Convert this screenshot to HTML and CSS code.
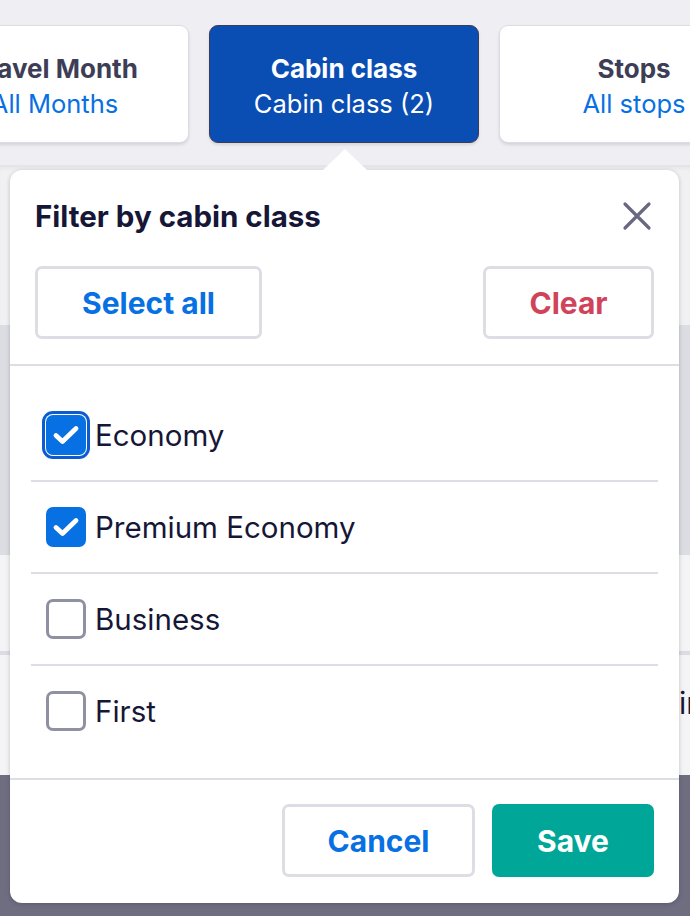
FILE: index.html
```html
<!DOCTYPE html>
<html lang="en">
<head>
    <meta charset="UTF-8">
    <meta name="viewport" content="width=device-width, initial-scale=1.0">
    <title>Cabin class filter</title>
    <link rel="stylesheet" href="styles.css">
</head>
<body>
    <div class="screen">
        <div class="tabs">
            <div class="tab tab-month">
                <span class="tab-title">Travel Month</span>
                <span class="tab-value">All Months</span>
            </div>
            <div class="tab tab-cabin active">
                <span class="tab-title">Cabin class</span>
                <span class="tab-value">Cabin class (2)</span>
            </div>
            <div class="tab tab-stops">
                <span class="tab-title">Stops</span>
                <span class="tab-value">All stops</span>
            </div>
        </div>

        <div class="page">
            <div class="band band-light"></div>
            <div class="band band-grey"></div>
            <div class="band band-rows">
                <div class="bg-row"></div>
                <div class="bg-row"><span class="bg-text">in</span></div>
            </div>
            <div class="band band-dark"></div>
        </div>

        <div class="popover">
            <div class="pop-header">
                <h2>Filter by cabin class</h2>
                <button class="close" aria-label="Close">
                    <svg width="30" height="30" viewBox="0 0 30 30">
                        <path d="M3 3 L27 27 M27 3 L3 27" stroke="#68697f" stroke-width="3.2" stroke-linecap="round" fill="none"/>
                    </svg>
                </button>
            </div>
            <div class="pop-actions">
                <button class="btn btn-outline btn-select">Select all</button>
                <button class="btn btn-outline btn-clear">Clear</button>
            </div>

            <ul class="options">
                <li class="option">
                    <span class="check checked focused">
                        <svg width="30" height="30" viewBox="0 0 30 30"><path d="M5 15.5 L11.5 21.5 L25 8.5" stroke="#fff" stroke-width="4.8" stroke-linecap="round" stroke-linejoin="round" fill="none"/></svg>
                    </span>
                    <span class="option-label">Economy</span>
                </li>
                <li class="option">
                    <span class="check checked">
                        <svg width="30" height="30" viewBox="0 0 30 30"><path d="M5 15.5 L11.5 21.5 L25 8.5" stroke="#fff" stroke-width="4.8" stroke-linecap="round" stroke-linejoin="round" fill="none"/></svg>
                    </span>
                    <span class="option-label">Premium Economy</span>
                </li>
                <li class="option">
                    <span class="check"></span>
                    <span class="option-label">Business</span>
                </li>
                <li class="option">
                    <span class="check"></span>
                    <span class="option-label">First</span>
                </li>
            </ul>

            <div class="pop-footer">
                <button class="btn btn-outline btn-cancel">Cancel</button>
                <button class="btn btn-save">Save</button>
            </div>
        </div>
    </div>
</body>
</html>
```

FILE: styles.css
```css
body {
    margin: 0;
    font-family: Inter, "Noto Sans", sans-serif;
    background-color: #eeeef3;
}
.screen {
    width: 690px;
    height: 916px;
    overflow: hidden;
    position: relative;
}

/* filter tabs at the top */
.tabs {
    display: flex;
    gap: 20px;
    padding-top: 25px;
    margin-left: -80px;
}
.tab {
    flex: none;
    height: 118px;
    box-sizing: border-box;
    display: flex;
    flex-direction: column;
    align-items: center;
    justify-content: center;
    gap: 4px;
    padding-top: 4px;
    background-color: #fff;
    border: 1px solid #dcdce3;
    border-radius: 9px;
    box-shadow: 0 2px 3px rgba(37, 32, 51, 0.12);
}
.tab-month { width: 269px; }
.tab-cabin { width: 270px; }
.tab-stops { width: 270px; }
.tab-title {
    font-size: 26px;
    font-weight: 700;
    color: #3d3e56;
}
.tab-value {
    font-size: 25.5px;
    color: #0770e3;
}
.tab.active {
    background-color: #0a4eb3;
    border-color: #3d3e56;
}
.tab.active .tab-title,
.tab.active .tab-value {
    color: #fff;
}

/* page content behind the popover */
.page {
    margin-top: 22px;
}
.band-light {
    height: 160px;
    background-color: #f1f1f4;
    box-shadow: inset 0 6px 6px -4px rgba(0, 0, 0, 0.08);
}
.band-grey {
    height: 230px;
    background-color: #dcdce3;
}
.band-rows {
    height: 220px;
    background-color: #f4f4f6;
    padding-top: 96px;
    box-sizing: border-box;
}
.bg-row {
    height: 96px;
    border-top: 2px solid #dcdce3;
    display: flex;
    align-items: center;
}
.bg-row:first-child {
    height: 0;
}
.bg-text {
    margin-left: 679px;
    font-size: 30px;
    color: #161637;
}
.band-dark {
    height: 200px;
    background-color: #6f6e81;
}

/* popover */
.popover {
    position: absolute;
    left: 10px;
    top: 170px;
    width: 669px;
    height: 733px;
    box-sizing: border-box;
    background-color: #fff;
    border-radius: 12px;
    box-shadow: 0 1px 4px rgba(37, 32, 51, 0.25);
    display: flex;
    flex-direction: column;
}
.popover::before {
    content: "";
    position: absolute;
    top: -21px;
    left: 312px;
    border-left: 23px solid transparent;
    border-right: 23px solid transparent;
    border-bottom: 22px solid #fff;
}
.pop-header {
    display: flex;
    align-items: center;
    justify-content: space-between;
    padding: 26px 27px 0 25px;
    height: 40px;
}
.pop-header h2 {
    margin: 0;
    font-size: 29.5px;
    font-weight: 700;
    color: #161637;
}
.close {
    border: none;
    background: none;
    padding: 0;
    width: 30px;
    height: 30px;
}
.pop-actions {
    display: flex;
    justify-content: space-between;
    padding: 30px 25px 25px;
    border-bottom: 2px solid #dddde5;
}
.btn {
    font-family: inherit;
    font-size: 30px;
    font-weight: 700;
    height: 73px;
    border-radius: 7px;
    cursor: pointer;
}
.btn-outline {
    background-color: #fff;
    border: 3px solid #dddde5;
}
.btn-select {
    width: 227px;
    color: #0770e3;
}
.btn-clear {
    width: 171px;
    color: #d1435b;
}

/* option list */
.options {
    list-style: none;
    margin: 0 21px;
    padding: 24px 0 0;
    flex: 1;
}
.option {
    display: flex;
    align-items: center;
    gap: 9px;
    height: 90px;
    padding-left: 15px;
    border-bottom: 2px solid #dddde5;
}
.option:last-child {
    border-bottom: none;
}
.check {
    width: 40px;
    height: 40px;
    box-sizing: border-box;
    border: 3px solid #8f90a1;
    border-radius: 7px;
    display: flex;
    align-items: center;
    justify-content: center;
}
.check.checked {
    background-color: #0770e3;
    border-color: #0770e3;
}
.check.focused {
    box-shadow: 0 0 0 1px #fff, 0 0 0 4px #0b5cd1;
}
.option-label {
    font-size: 29.5px;
    color: #161637;
}

/* footer */
.pop-footer {
    display: flex;
    justify-content: flex-end;
    gap: 17px;
    padding: 24px 25px 26px;
    border-top: 2px solid #dddde5;
}
.btn-cancel {
    width: 193px;
    color: #0770e3;
}
.btn-save {
    width: 162px;
    border: none;
    background-color: #00a698;
    color: #fff;
}
```
